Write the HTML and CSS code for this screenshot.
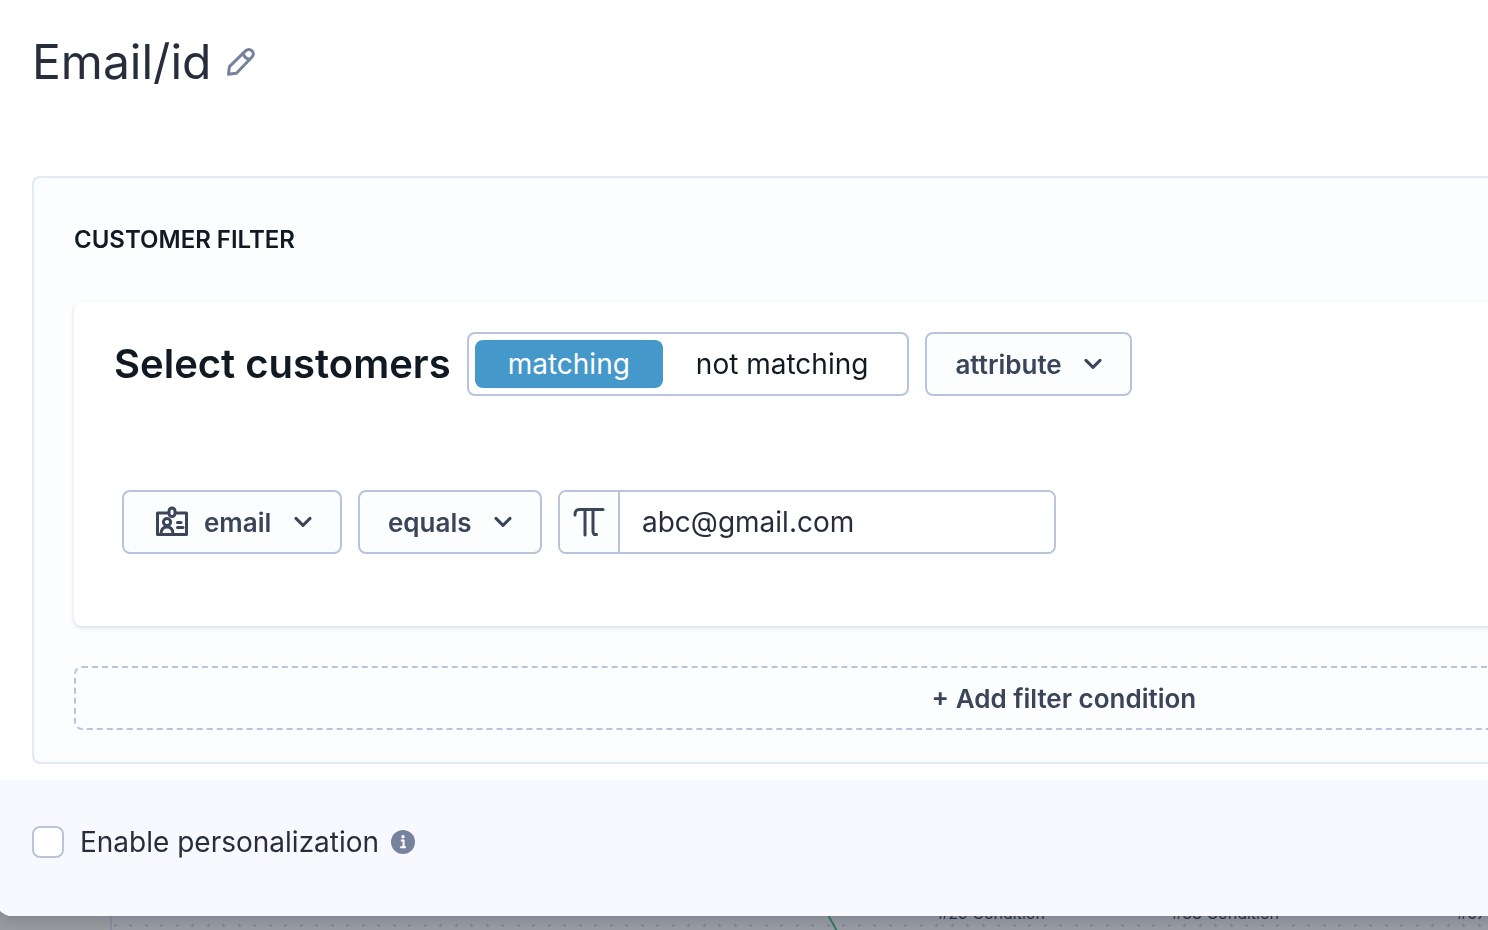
FILE: index.html
```html
<!DOCTYPE html>
<html lang="en">
<head>
  <meta charset="UTF-8">
  <meta name="viewport" content="width=device-width, initial-scale=1.0">
  <title>Email/id</title>
  <link rel="stylesheet" href="styles.css">
</head>
<body>

  <!-- scenario canvas behind the modal -->
  <div class="canvas" aria-hidden="true">
    <div class="canvas-grid"></div>
    <svg class="edge" width="40" height="60" viewBox="0 0 40 60"><path d="M4 0L34 54" stroke="#2f7d5b" stroke-width="2" fill="none"/></svg>
    <div class="node node-a">#29 Condition</div>
    <div class="node node-b">#38 Condition</div>
    <div class="node node-c">#57</div>
  </div>

  <main class="modal">
    <header class="modal-header">
      <h1>Email/id</h1>
      <button type="button" class="edit" aria-label="Rename">
        <svg width="28" height="28" viewBox="0 0 28 28" fill="none" stroke="#77829d" stroke-width="3" stroke-linejoin="round" stroke-linecap="round">
          <path d="M1.5 26.3L2.4 18.6L18.6 2.9C20.4 1.2 23 1 24.8 2.7C26.8 4.6 26.8 7.2 25 9L9.4 25.2Z"/>
          <path d="M16 5.2C17 8.4 19.6 10.8 22.6 11.2"/>
        </svg>
      </button>
    </header>

    <form id="formFilter">
      <section class="panel">
        <h2>CUSTOMER FILTER</h2>

        <div class="card">
          <div class="row">
            <h3>Select customers</h3>
            <div class="toggle" role="radiogroup" aria-label="Match mode">
              <label><input type="radio" name="match" value="matching" checked><span>matching</span></label>
              <label><input type="radio" name="match" value="not"><span>not matching</span></label>
            </div>
            <label class="dropdown">
              <select name="type" aria-label="Filter type">
                <option>attribute</option>
              </select>
              <svg width="18" height="12" viewBox="0 0 18 12"><path d="M2 2.4L9 9.4L16 2.4"/></svg>
            </label>
          </div>

          <div class="row conditions">
            <label class="dropdown">
              <svg class="badge" width="32" height="32" viewBox="0 0 32 32">
                <path d="M11.5 7H1.5V28.5H30.5V7H20.5"/>
                <rect x="13" y="2" width="6" height="8.5" rx="3"/>
                <circle cx="11" cy="16" r="3.6"/>
                <path d="M5 28C5 23.5 7 21 11 21S17 23.5 17 28M21.5 16.5H25M21.5 21.5H27"/>
              </svg>
              <select name="attribute" aria-label="Attribute">
                <option>email</option>
              </select>
              <svg width="18" height="12" viewBox="0 0 18 12"><path d="M2 2.4L9 9.4L16 2.4"/></svg>
            </label>
            <label class="dropdown">
              <select name="operator" aria-label="Operator">
                <option>equals</option>
              </select>
              <svg width="18" height="12" viewBox="0 0 18 12"><path d="M2 2.4L9 9.4L16 2.4"/></svg>
            </label>
            <div class="value">
              <button type="button" aria-label="Value type">
                <svg width="32" height="30" viewBox="0 0 32 30"><path d="M2 8C2 4 3 2.5 6.5 2.5H30M12 3V28M20 3V24C20 26.5 21 28 23.5 27.5"/></svg>
              </button>
              <input type="text" name="value" value="abc@gmail.com" aria-label="Value">
            </div>
          </div>
        </div>

        <button type="button" class="add">+ Add filter condition</button>
      </section>

      <footer class="modal-footer">
        <input type="checkbox" id="personalization">
        <label for="personalization">Enable personalization</label>
        <svg class="info" width="24" height="24" viewBox="0 0 24 24">
          <circle cx="12" cy="12" r="12" fill="#77829d"/>
          <circle cx="12" cy="6.8" r="1.7" fill="#fff"/>
          <path d="M9.8 10.6H12.6V17M9.2 17.2H15" stroke="#fff" stroke-width="2" fill="none"/>
        </svg>
      </footer>
    </form>
  </main>

</body>
</html>
```
FILE: styles.css
```css
* {
  box-sizing: border-box;
}
body {
  margin: 0;
  min-height: 100vh;
  overflow: hidden;
  font-family: Inter, "Liberation Sans", sans-serif;
  font-size: 28px;
  color: #272d3b;
  background-color: #9b9da1;
}
h1, h2, h3 {
  margin: 0;
}
button, input, select {
  font: inherit;
  color: inherit;
}

/* canvas */
.canvas {
  position: fixed;
  inset: 0;
  overflow: hidden;
}
.canvas-grid {
  height: 100%;
  margin-left: 110px;
  border-left: 2px solid #8a90a3;
  background-color: #9b9ea5;
  background-image:
    radial-gradient(circle, #858a9c 1px, transparent 2px),
    radial-gradient(circle, #858a9c 1px, transparent 2px);
  background-size: 31px 31px;
  background-position: -12px 11px, 3px 11px;
}
.edge {
  position: absolute;
  left: 818px;
  top: 904px;
}
.node {
  position: absolute;
  top: 903px;
  font-size: 16px;
  line-height: 20px;
  white-space: nowrap;
  color: #2b2f45;
}
.node-a {
  left: 938px;
}
.node-b {
  left: 1172px;
}
.node-c {
  left: 1457px;
}

/* modal, wider than the viewport */
.modal {
  position: relative;
  width: calc(143vw + 4px);
  margin-left: -4px;
  padding-left: 4px;
  overflow: hidden;
  background-color: #fff;
  border-radius: 0 0 16px 16px;
  box-shadow: 0 4px 16px rgba(40, 50, 80, 0.25);
}
.modal-header {
  display: flex;
  align-items: center;
  gap: 16px;
  padding: 32px 32px 84px;
}
h1 {
  font-size: 48px;
  font-weight: 400;
  line-height: 60px;
}
.edit {
  display: flex;
  padding: 0;
  border: none;
  background: none;
  cursor: pointer;
}
.panel {
  margin: 0 32px 16px;
  padding: 40px 40px 32px;
  border: 2px solid #e2e8f5;
  border-radius: 8px;
  background-color: #fcfdff;
}
h2 {
  font-size: 24px;
  font-weight: 600;
  line-height: 44px;
  color: #111923;
}
.card {
  margin: 40px 0;
  padding: 30px 40px 72px;
  background-color: #fff;
  border-radius: 8px;
  box-shadow: 0 2px 4px rgba(40, 50, 80, 0.16);
}
.row {
  display: flex;
  align-items: center;
  gap: 16px;
}
.conditions {
  margin-top: 94px;
  padding-left: 8px;
}
h3 {
  font-size: 40px;
  font-weight: 600;
  line-height: 64px;
  color: #111923;
}
.toggle {
  display: flex;
  height: 64px;
  padding: 6px;
  border: 2px solid #b9c4dc;
  border-radius: 8px;
  color: #111923;
}
.toggle label {
  position: relative;
  cursor: pointer;
}
.toggle input {
  position: absolute;
  opacity: 0;
}
.toggle span {
  display: block;
  padding: 0 33px;
  line-height: 48px;
  border-radius: 8px;
}
.toggle input:checked + span {
  background-color: #4598ca;
  color: #fff;
}
.dropdown {
  display: flex;
  align-items: center;
  height: 64px;
  padding: 0 28px;
  border: 2px solid #b9c4dc;
  border-radius: 8px;
  background-color: #fcfdff;
  color: #3b4559;
}
.dropdown select {
  margin-right: 22px;
  padding: 0;
  border: none;
  appearance: none;
  background: none;
  font-size: 26px;
  font-weight: 600;
  cursor: pointer;
}
.dropdown svg,
.value svg {
  fill: none;
  stroke: #3b4559;
  stroke-width: 3;
  stroke-linecap: round;
  stroke-linejoin: round;
}
.dropdown .badge {
  margin: 0 16px 0 4px;
}
.value {
  display: flex;
  height: 64px;
  border: 2px solid #b9c4dc;
  border-radius: 8px;
  overflow: hidden;
}
.value button {
  display: flex;
  align-items: center;
  justify-content: center;
  width: 60px;
  padding: 0;
  border: none;
  border-right: 2px solid #b9c4dc;
  background-color: #fcfdff;
}
.value input {
  width: 434px;
  padding: 0 22px;
  border: none;
  background-color: #fff;
}
.add {
  display: block;
  width: 100%;
  height: 64px;
  border: 2px dashed #b9c4dc;
  border-radius: 8px;
  background: none;
  font-size: 26px;
  font-weight: 600;
  color: #3b4559;
  cursor: pointer;
}
.modal-footer {
  display: flex;
  align-items: center;
  margin-left: -4px;
  padding: 40px 36px 52px;
  background-color: #f8f9fe;
}
.modal-footer input {
  width: 32px;
  height: 32px;
  margin: 0 16px 0 0;
  appearance: none;
  border: 2px solid #b9c4dc;
  border-radius: 8px;
  background-color: #fff;
}
.modal-footer label {
  line-height: 44px;
}
.info {
  margin-left: 12px;
}
```
